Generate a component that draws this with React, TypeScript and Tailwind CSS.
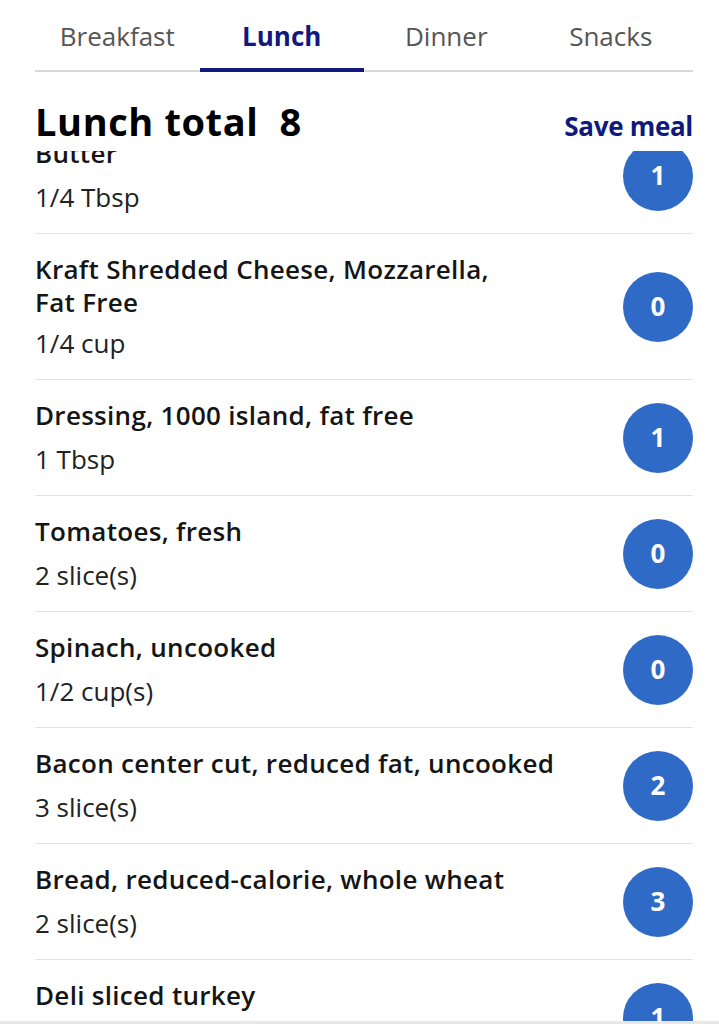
const tabs = ["Breakfast", "Lunch", "Dinner", "Snacks"];

const items = [
	{ name: ["Butter"], qty: "1/4 Tbsp", points: 1 },
	{ name: ["Kraft Shredded Cheese, Mozzarella,", "Fat Free"], qty: "1/4 cup", points: 0 },
	{ name: ["Dressing, 1000 island, fat free"], qty: "1 Tbsp", points: 1 },
	{ name: ["Tomatoes, fresh"], qty: "2 slice(s)", points: 0 },
	{ name: ["Spinach, uncooked"], qty: "1/2 cup(s)", points: 0 },
	{ name: ["Bacon center cut, reduced fat, uncooked"], qty: "3 slice(s)", points: 2 },
	{ name: ["Bread, reduced-calorie, whole wheat"], qty: "2 slice(s)", points: 3 },
	{ name: ["Deli sliced turkey"], qty: "2 oz", points: 1 },
];

const FoodRow = ({ name, qty, points }: { name: string[]; qty: string; points: number }) => {
	return (
		<div className="flex items-center justify-between border-b border-[#e4e4e4]">
			<div className="pt-[19px] pb-[19px]">
				{name.map((line) => (
					<div key={line} className="text-[26px] leading-[33px] font-semibold tracking-[0.3px] text-[#151515]">
						{line}
					</div>
				))}
				<div className={`${name.length > 1 ? "mt-[7px]" : "mt-[10px]"} text-[26px] leading-[34px] text-[#222]`}>
					{qty}
				</div>
			</div>
			<div className="flex items-center justify-center w-[70px] h-[70px] rounded-full bg-[#2f6ac7] text-white text-[26px] font-bold">
				{points}
			</div>
		</div>
	);
};

const App = () => {
	return (
		<div className="flex flex-col h-screen bg-white font-['Open_Sans',sans-serif]">
			<div className="pl-[35px] pr-[26px] shrink-0">
				<div className="flex border-b-2 border-[#d9d9d9]">
					{tabs.map((tab) => (
						<div
							key={tab}
							className={
								tab === "Lunch"
									? "flex-1 -mb-[2px] pt-[20px] pb-[16px] text-center text-[26px] leading-[32px] font-bold text-[#10197f] border-b-4 border-[#10197f]"
									: "flex-1 -mb-[2px] pt-[20px] pb-[16px] text-center text-[26px] leading-[32px] text-[#555] border-b-4 border-transparent"
							}
						>
							{tab}
						</div>
					))}
				</div>
				<div className="flex items-baseline justify-between pt-[29px] pb-[9px]">
					<h1 className="text-[38px] leading-[40px] font-bold tracking-[0.6px] text-black whitespace-pre">Lunch total  8</h1>
					<button className="text-[26px] leading-[32px] font-bold tracking-[-0.3px] text-[#0f1a7d]">Save meal</button>
				</div>
			</div>
			<div className="flex-1 overflow-hidden pl-[35px] pr-[26px]">
				<div className="-mt-[33px]">
					{items.map((item) => (
						<FoodRow key={item.qty + item.name[0]} {...item} />
					))}
				</div>
			</div>
			<div className="h-[3px] shrink-0 bg-[#e8e8e8]" />
		</div>
	);
};

export default App;
